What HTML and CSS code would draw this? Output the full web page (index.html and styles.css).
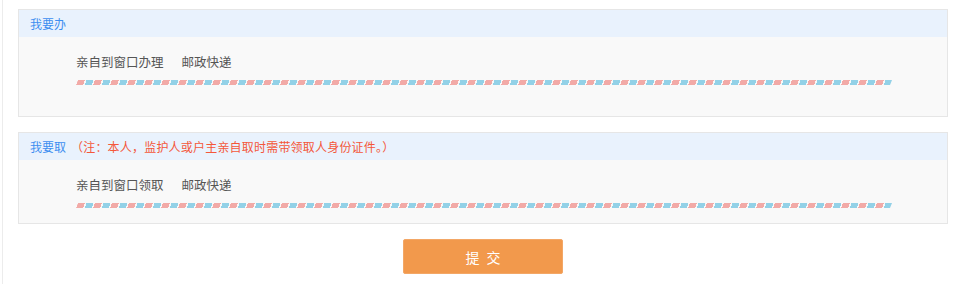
FILE: index.html
```html
<!DOCTYPE html>
<html lang="zh-CN">
<head>
<meta charset="utf-8">
<title>办理方式</title>
<link rel="stylesheet" href="styles.css">
</head>
<body>
<div class="page">
  <section class="panel panel-do">
    <div class="panel-head"><span class="head-title">我要办</span></div>
    <div class="panel-body">
      <div class="options">
        <span class="opt">亲自到窗口办理</span>
        <span class="opt">邮政快递</span>
      </div>
      <div class="airmail"></div>
    </div>
  </section>
  <section class="panel panel-get">
    <div class="panel-head"><span class="head-title">我要取</span><span class="head-note">（注：本人，监护人或户主亲自取时需带领取人身份证件。）</span></div>
    <div class="panel-body">
      <div class="options">
        <span class="opt">亲自到窗口领取</span>
        <span class="opt">邮政快递</span>
      </div>
      <div class="airmail"></div>
    </div>
  </section>
  <div class="actions">
    <button class="submit" type="button">提 交</button>
  </div>
</div>
</body>
</html>
```
FILE: styles.css
```css
html, body {
  margin: 0;
  padding: 0;
  background: #ffffff;
}
body {
  font-family: "Noto Sans CJK SC", "Noto Sans", sans-serif;
  width: 960px;
  height: 284px;
  overflow: hidden;
}
.page {
  margin-left: 2px;
  border-left: 1px solid #ececec;
  height: 284px;
  box-sizing: border-box;
  padding: 9px 12px 0 15px;
}
.panel {
  width: 930px;
  box-sizing: border-box;
  border: 1px solid #e6e6e6;
  background: #f9f9f9;
}
.panel-get {
  margin-top: 15px;
}
.panel-head {
  background: #e9f2fd;
  height: 27px;
  display: flex;
  align-items: center;
  padding-left: 11px;
  font-size: 12px;
}
.head-title {
  color: #3d8ef0;
}
.head-note {
  color: #f4573a;
  margin-left: 5px;
  letter-spacing: 0.2px;
}
.panel-body {
  padding: 16px 0 31px 57px;
}
.panel-get .panel-body {
  padding: 16px 0 15px 57px;
}
.options {
  display: flex;
  gap: 18px;
  font-size: 12.5px;
  line-height: 18px;
  color: #555555;
}
.airmail {
  margin-top: 9px;
  width: 814px;
  height: 5px;
  background: repeating-linear-gradient(90deg,
    #f2aaa7 0 7px, transparent 7px 8.5px,
    #93d1e7 8.5px 15.5px, transparent 15.5px 17px);
  transform: skewX(-22deg);
  transform-origin: left bottom;
}
.actions {
  display: flex;
  justify-content: center;
  width: 930px;
  margin-top: 15px;
}
.submit {
  width: 160px;
  height: 35px;
  border: 1px solid #f3a766;
  border-radius: 2px;
  background: #f2994c;
  color: #ffffff;
  font-family: "Noto Sans CJK SC", sans-serif;
  font-size: 14px;
  letter-spacing: 2px;
  padding: 0 0 0 2px;
}
```
